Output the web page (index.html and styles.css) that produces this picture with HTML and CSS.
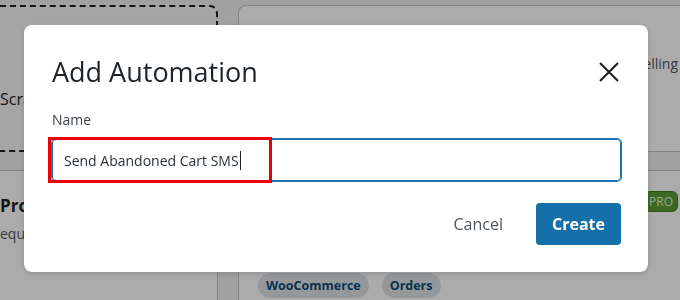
FILE: index.html
```html
<!DOCTYPE html>
<html lang="en">
<head>
    <meta charset="UTF-8">
    <title>Add Automation</title>
    <link rel="stylesheet" href="styles.css">
</head>
<body>

    <div class="page">
        <div class="card card-dashed">
            <div class="scratch">Scratch</div>
        </div>
        <div class="card card-right">
            <div class="card-desc">Recover lost revenue with upselling</div>
        </div>
        <div class="card card-low">
            <div class="card-title">Pro</div>
            <div class="card-sub">equest</div>
        </div>
        <div class="card card-right card-low card-tags">
            <div class="badge-row"><span class="pro-badge">PRO</span></div>
            <div class="tags">
                <span class="tag">WooCommerce</span>
                <span class="tag">Orders</span>
            </div>
        </div>
    </div>

    <div class="overlay">
        <div class="modal">
            <div class="modal-head">
                <h2>Add Automation</h2>
                <button class="close" aria-label="Close">
                    <svg width="20" height="20" viewBox="0 0 20 20">
                        <path d="M1 1 L19 19 M19 1 L1 19" stroke="#1d2327" stroke-width="2.2" fill="none"/>
                    </svg>
                </button>
            </div>

            <label class="label">Name</label>
            <div class="field">
                <div class="input">Send Abandoned Cart SMS<span class="caret"></span></div>
                <!-- annotation box from the tutorial -->
                <div class="highlight"></div>
            </div>

            <div class="modal-foot">
                <button class="btn-cancel">Cancel</button>
                <button class="btn-create">Create</button>
            </div>
        </div>
    </div>

</body>
</html>
```

FILE: styles.css
```css
body {
    margin: 0;
    background-color: #f0f0f1;
    font-family: 'Open Sans', 'Noto Sans', sans-serif;
    color: #1d2327;
    overflow: hidden;
    height: 300px;
}

.page {
    display: grid;
    grid-template-columns: 218px 1fr;
    grid-template-rows: 147px 130px;
    gap: 18px 20px;
    padding-top: 5px;
}

.card {
    background-color: #fff;
    border: 1px solid #c3c4c7;
    border-left: none;
    border-radius: 0 8px 8px 0;
    box-sizing: border-box;
    padding: 20px 20px 20px 0;
}

.card-right {
    border-left: 1px solid #c3c4c7;
    border-right: none;
    border-radius: 8px 0 0 8px;
    padding: 20px 0 20px 19px;
}

.card-low {
    border-bottom: none;
    border-bottom-left-radius: 0;
    border-bottom-right-radius: 0;
}

.card-dashed {
    border: 2px dashed #1d2327;
    border-left: none;
    background-color: #f6f7f7;
    padding-top: 81px;
}

.scratch {
    font-size: 16px;
}

.card-desc {
    text-align: right;
    font-size: 14px;
    color: #50575e;
    padding-top: 28px;
    white-space: nowrap;
    overflow: hidden;
    margin-right: 2px;
}

.card-title {
    font-size: 17px;
    font-weight: 700;
    padding-top: 3px;
}

.card-sub {
    font-size: 14px;
    color: #50575e;
    margin-top: 7px;
}

.card-tags {
    display: flex;
    flex-direction: column;
    padding: 20px 2px 0 19px;
}

.badge-row {
    display: flex;
    justify-content: flex-end;
}

.pro-badge {
    background-color: #5c9e33;
    border: 1px solid #3f7d1c;
    color: #e6f2dc;
    font-size: 12px;
    padding: 0 4px;
    border-radius: 6px;
    line-height: 19px;
}

.tags {
    display: flex;
    gap: 13px;
    margin-top: 61px;
}

.tag {
    background-color: #dfe3e8;
    color: #0a4b78;
    font-size: 12.5px;
    font-weight: 700;
    padding: 4px 8px;
    border-radius: 14px;
}

.overlay {
    position: fixed;
    inset: 0;
    background-color: rgba(0, 0, 0, 0.33);
    display: flex;
    align-items: flex-start;
    padding: 25px 0 0 24px;
}

.modal {
    width: 624px;
    height: 247px;
    box-sizing: border-box;
    background-color: #fff;
    border-radius: 8px;
    padding: 30px 27px 27px 28px;
    display: flex;
    flex-direction: column;
    box-shadow: 0 2px 6px rgba(0, 0, 0, 0.15);
}

.modal-head {
    display: flex;
    justify-content: space-between;
    align-items: center;
}

.modal-head h2 {
    margin: 0;
    font-size: 27px;
    font-weight: 400;
    line-height: 34px;
    color: #1d2327;
}

.close {
    background: none;
    border: none;
    padding: 0;
    margin-right: 2px;
    width: 20px;
    height: 20px;
    cursor: pointer;
}

.label {
    font-size: 14px;
    line-height: 20px;
    color: #3c434a;
    margin-top: 21px;
}

.field {
    position: relative;
    margin-top: 9px;
}

.input {
    height: 42px;
    box-sizing: border-box;
    border: 1px solid #2271b1;
    box-shadow: 0 0 0 1px #2271b1;
    border-radius: 4px;
    padding: 0 11px;
    font-size: 14px;
    color: #2c3338;
    display: flex;
    align-items: center;
}

.caret {
    display: inline-block;
    width: 1px;
    height: 19px;
    background-color: #1d2327;
    margin-left: 1px;
}

.highlight {
    position: absolute;
    left: -4px;
    top: -2px;
    width: 224px;
    height: 46px;
    box-sizing: border-box;
    border: 3px solid #ee0000;
}

.modal-foot {
    display: flex;
    justify-content: flex-end;
    align-items: center;
    gap: 33px;
    margin-top: 22px;
}

.btn-cancel {
    background: none;
    border: none;
    padding: 0;
    font-family: inherit;
    font-size: 16px;
    color: #50575e;
    cursor: pointer;
}

.btn-create {
    background-color: #1570a9;
    color: #fff;
    border: none;
    border-radius: 4px;
    height: 42px;
    width: 85px;
    font-family: inherit;
    font-size: 16px;
    font-weight: 700;
    cursor: pointer;
}
```
